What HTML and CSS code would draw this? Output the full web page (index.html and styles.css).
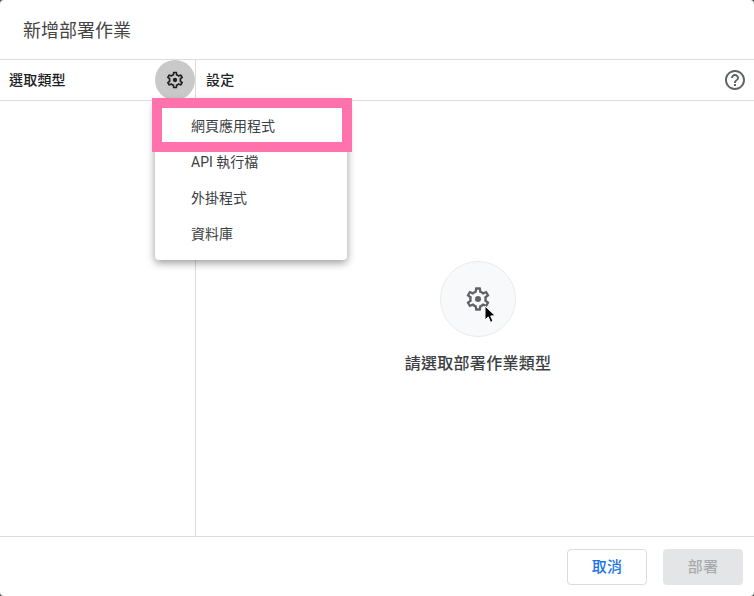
FILE: index.html
```html
<!DOCTYPE html>
<html lang="zh-Hant">
<head>
    <meta charset="UTF-8">
    <meta name="viewport" content="width=device-width, initial-scale=1.0">
    <title>新增部署作業</title>
    <link rel="stylesheet" href="styles.css">
</head>
<body>
    <svg class="defs" width="0" height="0">
        <symbol id="gear" viewBox="0 0 24 24">
            <path fill-rule="evenodd" d="M19.43 12.98c.04-.32.07-.64.07-.98 0-.34-.03-.66-.07-.98l2.11-1.65c.19-.15.24-.42.12-.64l-2-3.46c-.09-.16-.26-.25-.44-.25-.06 0-.12.01-.17.03l-2.49 1c-.52-.4-1.08-.73-1.69-.98l-.38-2.65C14.46 2.18 14.25 2 14 2h-4c-.25 0-.46.18-.49.42l-.38 2.65c-.61.25-1.17.59-1.69.98l-2.49-1c-.06-.02-.12-.03-.18-.03-.17 0-.34.09-.43.25l-2 3.46c-.13.22-.07.49.12.64l2.11 1.65c-.04.32-.07.65-.07.98 0 .33.03.66.07.98l-2.11 1.65c-.19.15-.24.42-.12.64l2 3.46c.09.16.26.25.44.25.06 0 .12-.01.17-.03l2.49-1c.52.4 1.08.73 1.69.98l.38 2.65c.03.24.24.42.49.42h4c.25 0 .46-.18.49-.42l.38-2.65c.61-.25 1.17-.59 1.69-.98l2.49 1c.06.02.12.03.18.03.17 0 .34-.09.43-.25l2-3.46c.12-.22.07-.49-.12-.64l-2.11-1.65zm-1.98-1.71c.04.31.05.52.05.73 0 .21-.02.43-.05.73l-.14 1.13.89.7 1.08.84-.7 1.21-1.27-.51-1.04-.42-.9.68c-.43.32-.84.56-1.25.73l-1.06.43-.16 1.13-.2 1.35h-1.4l-.19-1.35-.16-1.13-1.06-.43c-.43-.18-.83-.41-1.23-.71l-.91-.7-1.06.43-1.27.51-.7-1.21 1.08-.84.89-.7-.14-1.13c-.03-.31-.05-.54-.05-.74s.02-.43.05-.73l.14-1.13-.89-.7-1.08-.84.7-1.21 1.27.51 1.04.42.9-.68c.43-.32.84-.56 1.25-.73l1.06-.43.16-1.13.2-1.35h1.39l.19 1.35.16 1.13 1.06.43c.43.18.83.41 1.23.71l.91.7 1.06-.43 1.27-.51.7 1.21-1.07.85-.89.7.14 1.13z"/>
            <circle cx="12" cy="12" r="2.6"/>
        </symbol>
    </svg>

    <div class="dialog">
        <div class="dialog-title">新增部署作業</div>

        <div class="dialog-body">
            <div class="side">
                <div class="side-head">
                    <span class="head-label">選取類型</span>
                    <span class="gear-btn"><svg class="gear-small"><use href="#gear"/></svg></span>
                </div>
            </div>
            <div class="main">
                <div class="main-head">
                    <span class="head-label">設定</span>
                    <svg class="help" viewBox="0 0 24 24">
                        <path d="M11 18h2v-2h-2v2zm1-16C6.48 2 2 6.48 2 12s4.480 10 10 10 10-4.480 10-10S17.520 2 12 2zm0 18c-4.410 0-8-3.590-8-8s3.590-8 8-8 8 3.590 8 8-3.590 8-8 8zm0-14c-2.210 0-4 1.790-4 4h2c0-1.100.9-2 2-2s2 .9 2 2c0 2-3 1.750-3 5h2c0-2.250 3-2.500 3-5 0-2.210-1.790-4-4-4z"/>
                    </svg>
                </div>
                <div class="empty">
                    <div class="empty-icon">
                        <svg class="gear-large"><use href="#gear"/></svg>
                        <svg class="cursor" viewBox="0 0 12 19">
                            <path d="M1 1v14l3.300-3.100 2.200 5.400 2.500-1-2.300-5.300 4.500-.3z" stroke="#fff" stroke-width="1"/>
                        </svg>
                    </div>
                    <div class="empty-text">請選取部署作業類型</div>
                </div>
            </div>
        </div>

        <div class="dialog-foot">
            <button class="btn btn-cancel">取消</button>
            <button class="btn btn-deploy" disabled>部署</button>
        </div>

        <ul class="menu">
            <li>網頁應用程式</li>
            <li>API 執行檔</li>
            <li>外掛程式</li>
            <li>資料庫</li>
        </ul>
        <div class="highlight"></div>
    </div>
</body>
</html>
```

FILE: styles.css
```css
html, body{
    margin: 0;
    height: 100%;
    background-color: #55585c;
}
.defs{
    position: absolute;
}
.dialog{
    position: relative;
    display: flex;
    flex-direction: column;
    width: 754px;
    height: 596px;
    overflow: hidden;
    border-radius: 4px;
    background-color: #fff;
    color: #3c4043;
    font-family: Roboto, "Noto Sans CJK TC", sans-serif;
}
.dialog-title{
    height: 59px;
    box-sizing: border-box;
    padding: 18px 23px 0;
    font-size: 18px;
    line-height: 26px;
    color: #444;
}
.dialog-body{
    flex: 1;
    display: flex;
    border-top: 1px solid #dadce0;
    border-bottom: 1px solid #dadce0;
}
.side{
    width: 195px;
    border-right: 1px solid #dadce0;
}
.side-head, .main-head{
    display: flex;
    align-items: center;
    justify-content: space-between;
    height: 40px;
    border-bottom: 1px solid #dadce0;
}
.side-head{
    padding-left: 9px;
}
.main-head{
    padding: 0 7px 0 10px;
}
.head-label{
    margin-top: -2px;
    font-size: 14px;
    font-weight: 500;
    letter-spacing: .2px;
    color: #202124;
}
.gear-btn{
    display: flex;
    align-items: center;
    justify-content: center;
    width: 40px;
    height: 40px;
    border-radius: 50%;
    background-color: #c9c9c9;
}
.gear-small{
    width: 20px;
    height: 20px;
    fill: #202124;
}
.help{
    width: 24px;
    height: 24px;
    fill: #5f6368;
}
.main{
    flex: 1;
    display: flex;
    flex-direction: column;
}
.empty{
    display: flex;
    flex-direction: column;
    align-items: center;
    padding: 160px 0 0 6px;
}
.empty-icon{
    position: relative;
    display: flex;
    align-items: center;
    justify-content: center;
    width: 74px;
    height: 74px;
    border: 1px solid #e8eaed;
    border-radius: 50%;
    background-color: #f8f9fa;
}
.gear-large{
    width: 28px;
    height: 28px;
    fill: #5f6368;
}
.cursor{
    position: absolute;
    left: 43px;
    top: 44px;
    width: 12px;
    height: 19px;
    transform: translateY(-1px);
}
.empty-text{
    margin-top: 15px;
    font-size: 16px;
    line-height: 24px;
    font-weight: 500;
    letter-spacing: .3px;
    color: #3c4043;
}
.dialog-foot{
    display: flex;
    justify-content: flex-end;
    align-items: center;
    gap: 16px;
    height: 59px;
    padding: 0 11px 0 0;
}
.btn{
    width: 80px;
    height: 36px;
    padding: 0 0 2px;
    border-radius: 4px;
    font-family: inherit;
    font-size: 15px;
    font-weight: 500;
    letter-spacing: .3px;
}
.btn-cancel{
    border: 1px solid #dadce0;
    background-color: #fff;
    color: #1a73e8;
}
.btn-deploy{
    border: 0;
    background-color: #e4e5e6;
    color: #a8abae;
}
.menu{
    position: absolute;
    left: 155px;
    top: 100px;
    width: 192px;
    box-sizing: border-box;
    margin: 0;
    padding: 8px 0;
    list-style: none;
    border-radius: 4px;
    background-color: #fff;
    box-shadow: 0 3px 8px rgba(0, 0, 0, 0.4);
    font-size: 14px;
    color: #3c4043;
}
.menu li{
    height: 36px;
    line-height: 36px;
    padding-left: 36px;
}
.highlight{
    position: absolute;
    left: 152px;
    top: 98px;
    width: 180px;
    height: 34px;
    border: 10px solid #ff72ab;
}
```
